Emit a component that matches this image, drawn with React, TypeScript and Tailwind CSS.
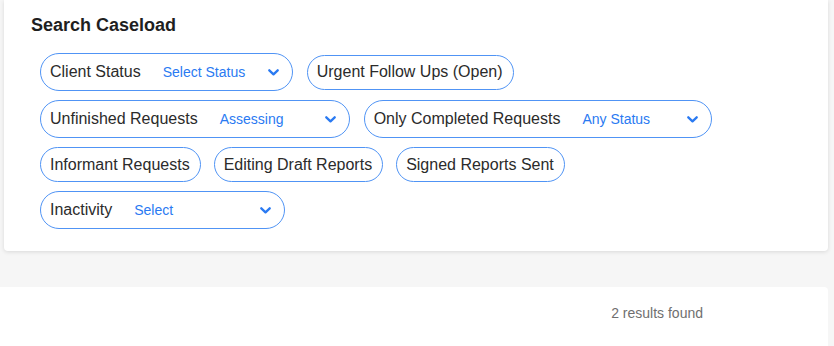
import React from "react";

const Chevron = () => (
  <svg width="11" height="7" viewBox="0 0 11 7" fill="none" className="shrink-0">
    <path d="M1.3 1.3 L5.5 5.3 L9.7 1.3" stroke="#2a7af2" strokeWidth="2.3" strokeLinecap="round" strokeLinejoin="round" />
  </svg>
);

const PlainChip = ({ label }: { label: string }) => (
  <div className="h-[35px] flex items-center pl-[9px] pr-[10px] rounded-full border-[1.5px] border-[#5094f5] bg-white text-[16px] text-[#2b2b2b] leading-none whitespace-nowrap">
    {label}
  </div>
);

const DropChip = ({ label, value, w }: { label: string; value: string; w: string }) => (
  <div className="h-[38px] flex items-center pl-[9px] pr-[13px] rounded-full border-[1.5px] border-[#5094f5] bg-white whitespace-nowrap">
    <span className="text-[16px] text-[#2b2b2b] leading-none">{label}</span>
    <div className={`ml-[22px] flex items-center justify-between ${w}`}>
      <span className="text-[14px] text-[#2a7af2] leading-none">{value}</span>
      <Chevron />
    </div>
  </div>
);

export default function App() {
  return (
    <div className="h-[346px] bg-[#f6f6f6] font-['Liberation_Sans',Arial,sans-serif] overflow-hidden">
      <div className="ml-[4px] mr-[6px] bg-white rounded-b-[4px] shadow-[0_1px_4px_rgba(0,0,0,0.12)] pt-[14px] pb-[22px] pl-[27px]">
        <h2 className="text-[18px] font-bold leading-[22px] text-[#1f1f1f]">Search Caseload</h2>
        <div className="mt-[17px] ml-[9px] flex flex-col gap-y-[9px]">
          <div className="flex items-center gap-x-[14px]">
            <DropChip label="Client Status" value="Select Status" w="w-[116px]" />
            <PlainChip label="Urgent Follow Ups (Open)" />
          </div>
          <div className="flex items-center gap-x-[14px]">
            <DropChip label="Unfinished Requests" value="Assessing" w="w-[116px]" />
            <DropChip label="Only Completed Requests" value="Any Status" w="w-[116px]" />
          </div>
          <div className="flex items-center gap-x-[13px]">
            <PlainChip label="Informant Requests" />
            <PlainChip label="Editing Draft Reports" />
            <PlainChip label="Signed Reports Sent" />
          </div>
          <div className="flex items-center">
            <DropChip label="Inactivity" value="Select" w="w-[137px]" />
          </div>
        </div>
      </div>
      <div className="mt-[36px] mr-[6px] bg-white rounded-tr-[4px] h-[59px] flex justify-end pr-[125px] pt-[17px]">
        <span className="text-[14px] text-[#6f6f6f] leading-[18px]">2 results found</span>
      </div>
    </div>
  );
}
